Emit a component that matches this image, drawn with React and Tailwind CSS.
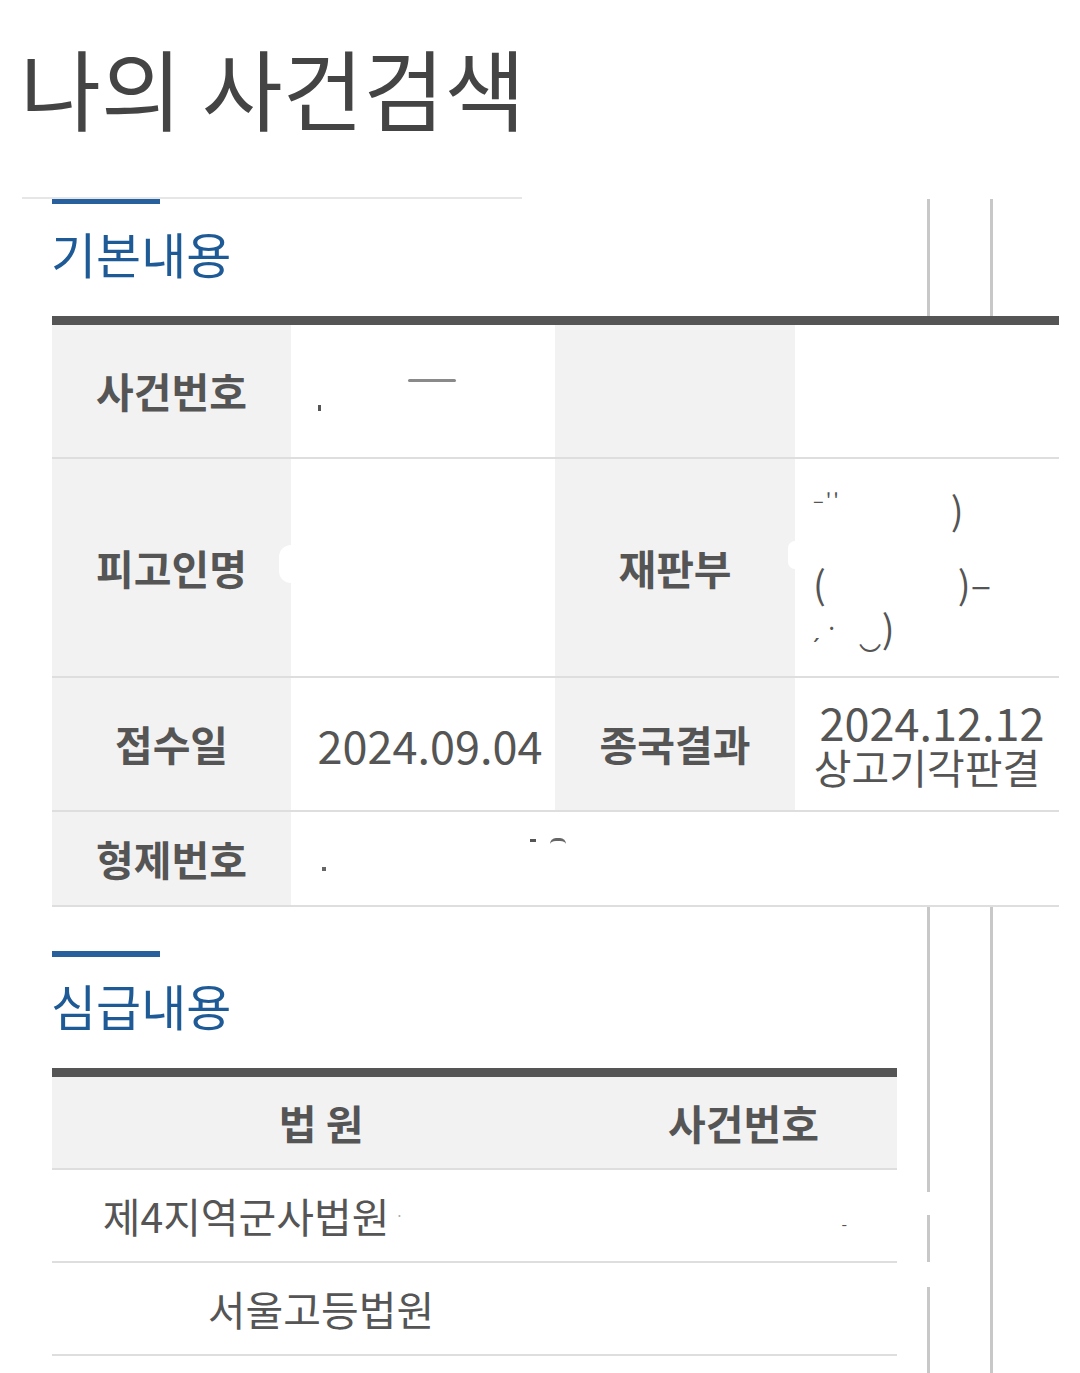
import React from "react";

const FONT = "font-['Noto_Sans_CJK_KR','Noto_Sans',sans-serif]";

function Speck({ className }) {
  return <div className={`absolute ${className}`} />;
}

function Label({ children }) {
  return (
    <div className="flex items-center justify-center bg-[#f2f2f2] text-[41px] font-bold">{children}</div>
  );
}

function Rail({ className }) {
  return <div className={`absolute w-[3px] bg-[#c8c8c8] ${className}`} />;
}

export default function App() {
  return (
    <div className={`relative w-[1080px] h-[1373px] overflow-hidden bg-white ${FONT}`}>
      {/* right-side background rails */}
      <Rail className="left-[927px] top-[199px] h-[117px]" />
      <Rail className="left-[990px] top-[199px] h-[117px]" />
      <Rail className="left-[927px] top-[907px] h-[285px]" />
      <Rail className="left-[927px] top-[1215px] h-[47px]" />
      <Rail className="left-[927px] top-[1287px] h-[86px]" />
      <Rail className="left-[990px] top-[907px] h-[466px]" />

      <div className="relative flex flex-col">
        {/* Title */}
        <div className="h-[197px] pl-[20px] pt-[42px]">
          <h1 className="text-[88px] leading-none font-normal tracking-[0px] text-[#444444]">
            나의 사건검색
          </h1>
        </div>
        <div className="ml-[22px] h-[2px] w-[500px] bg-[#e6e6e6]" />
        <div className="ml-[52px] h-[5px] w-[108px] bg-[#27609c]" />

        {/* 기본내용 */}
        <div className="h-[112px] pl-[51px] pt-[24px]">
          <h2 className="text-[49px] leading-none font-normal text-[#1d5a96]">기본내용</h2>
        </div>

        <div className="ml-[52px] w-[1007px] border-t-[9px] border-[#555555] text-[#555555]">
          {/* row 1 */}
          <div className="relative grid h-[134px] grid-cols-[239px_264px_240px_264px] border-b-2 border-[#dedede]">
            <Label>사건번호</Label>
            <div className="bg-white" />
            <div className="bg-[#f2f2f2]" />
            <div className="bg-white" />
            <Speck className="left-[356px] top-[54px] h-[3px] w-[48px] rounded-full bg-[#8a8a8a]" />
            <Speck className="left-[266px] top-[80px] h-[6px] w-[3px] bg-[#555]" />
          </div>

          {/* row 2 */}
          <div className="relative grid h-[219px] grid-cols-[239px_264px_240px_264px] border-b-2 border-[#dedede]">
            <Label>피고인명</Label>
            <div className="bg-white" />
            <Label>재판부</Label>
            <div className="relative flex flex-col justify-center gap-[6px] bg-white pl-[18px] text-[38px] leading-[38px] font-normal">
              <div className="flex items-start gap-[110px]">
                <span className="text-[20px] leading-[20px] tracking-[2px]">–&#39;&#39;</span>
                <span>)</span>
              </div>
              <div className="flex gap-[132px] pt-[30px]">
                <span>(</span>
                <span>)–</span>
              </div>
              <div className="flex items-end gap-[20px]">
                <span className="text-[24px]">ˏ ·</span>
                <span>‿)</span>
              </div>
            </div>
            <Speck className="left-[227px] top-[86px] h-[38px] w-[24px] rounded-full bg-white" />
            <Speck className="left-[736px] top-[82px] h-[28px] w-[14px] rounded-full bg-white" />
          </div>

          {/* row 3 */}
          <div className="grid h-[134px] grid-cols-[239px_264px_240px_264px] border-b-2 border-[#dedede]">
            <Label>접수일</Label>
            <div className="flex items-center justify-center bg-white pl-[14px] text-[45px] leading-none">2024.09.04</div>
            <Label>종국결과</Label>
            <div className="flex flex-col items-center justify-center bg-white">
              <div className="pl-[10px] text-[45px] leading-[44px]">2024.12.12</div>
              <div className="text-[41px] leading-[44px]">상고기각판결</div>
            </div>
          </div>

          {/* row 4 */}
          <div className="relative grid h-[95px] grid-cols-[239px_768px] border-b-2 border-[#dedede]">
            <Label>형제번호</Label>
            <div className="bg-white" />
            <Speck className="left-[478px] top-[27px] h-[3px] w-[6px] bg-[#555]" />
            <Speck className="left-[498px] top-[26px] h-[6px] w-[16px] rounded-t-full border-t-[3px] border-[#666]" />
            <Speck className="left-[270px] top-[55px] h-[4px] w-[4px] bg-[#666]" />
          </div>
        </div>

        {/* 심급내용 */}
        <div className="ml-[52px] mt-[44px] h-[6px] w-[108px] bg-[#27609c]" />
        <div className="h-[111px] pl-[51px] pt-[23px]">
          <h2 className="text-[49px] leading-none font-normal text-[#1d5a96]">심급내용</h2>
        </div>

        <div className="ml-[52px] w-[845px] border-t-[9px] border-[#555555] text-[#555555]">
          <div className="grid h-[93px] grid-cols-[538px_307px] border-b-2 border-[#dedede] bg-[#f2f2f2] text-[41px] font-bold">
            <div className="flex items-center justify-center">법 원</div>
            <div className="flex items-center justify-center">사건번호</div>
          </div>
          <div className="grid h-[93px] grid-cols-[538px_307px] border-b-2 border-[#dedede] text-[41px]">
            <div className="flex items-center justify-center pr-[136px]">
              제4지역군사법원<span className="ml-[6px] text-[14px] text-[#aaa]">·</span>
            </div>
            <div className="flex items-center justify-end pr-[50px] pt-[14px] text-[16px]">-</div>
          </div>
          <div className="grid h-[93px] grid-cols-[538px_307px] border-b-2 border-[#dedede] text-[41px]">
            <div className="flex items-center justify-center">서울고등법원</div>
            <div />
          </div>
        </div>
      </div>
    </div>
  );
}
